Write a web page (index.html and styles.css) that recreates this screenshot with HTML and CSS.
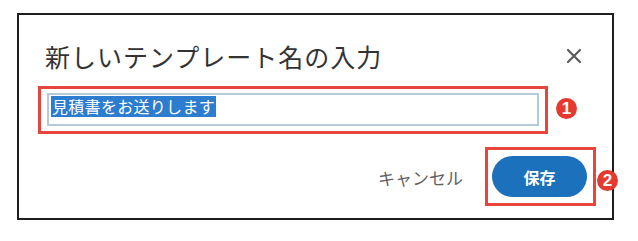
FILE: index.html
```html
<!DOCTYPE html>
<html lang="ja">
<head>
<meta charset="utf-8">
<title>新しいテンプレート名の入力</title>
<link rel="stylesheet" href="styles.css">
</head>
<body>
<div class="frame">
  <div class="header">
    <h1 class="title">新しいテンプレート名の入力</h1>
    <span class="close" aria-label="閉じる">
      <svg width="16" height="16" viewBox="0 0 16 16"><path d="M2 2 L14 14 M14 2 L2 14" stroke="#5a5a5a" stroke-width="2.2" stroke-linecap="round" fill="none"/></svg>
    </span>
  </div>
  <div class="input-row">
    <div class="mark mark-input">
      <div class="field"><span class="sel">見積書をお送りします</span></div>
    </div>
    <span class="badge">1</span>
  </div>
  <div class="footer">
    <span class="cancel">キャンセル</span>
    <div class="mark mark-btn">
      <button class="save">保存</button>
    </div>
    <span class="badge badge-2">2</span>
  </div>
</div>
</body>
</html>
```

FILE: styles.css
```css
html, body {
  margin: 0;
  padding: 0;
  background: #ffffff;
}
body {
  font-family: "Noto Sans CJK JP", "Noto Sans", sans-serif;
  padding: 13px 0 0 17px;
}
.frame {
  box-sizing: border-box;
  width: 597px;
  height: 207px;
  border: 2px solid #1e1e1e;
  background: #fff;
}
.header {
  display: flex;
  align-items: center;
  justify-content: space-between;
  padding: 26px 30px 0 26px;
  height: 30px;
}
.title {
  margin: 0;
  font-size: 25px;
  font-weight: 400;
  line-height: 30px;
  color: #333333;
  letter-spacing: 1px;
}
.close {
  display: flex;
  width: 16px;
  height: 16px;
}
.input-row {
  display: flex;
  align-items: center;
  margin-top: 15px;
  padding-left: 19px;
}
.mark {
  box-sizing: border-box;
  border: 3px solid #e5453b;
}
.mark-input {
  width: 510px;
  height: 48px;
  padding: 4px 6px 5px 6px;
}
.field {
  box-sizing: border-box;
  height: 33px;
  border: 2px solid #b5cad7;
  padding: 1px 0 0 2px;
  font-size: 16px;
  line-height: 21px;
  display: flex;
  align-items: flex-start;
}
.sel {
  background: #2c7ccf;
  color: #ffffff;
  padding: 0 1px;
  letter-spacing: 0.3px;
}
.badge {
  display: flex;
  align-items: center;
  justify-content: center;
  width: 21px;
  height: 21px;
  border-radius: 50%;
  background: #e53a2f;
  color: #fff;
  font-family: "Liberation Sans", Arial, sans-serif;
  font-weight: 700;
  font-size: 17px;
  line-height: 1;
  margin-left: 8px;
  margin-top: -3px;
}
.footer {
  display: flex;
  align-items: center;
  justify-content: flex-end;
  margin-top: 13px;
}
.cancel {
  font-size: 17px;
  color: #5f5f5f;
  margin-right: 22px;
  margin-top: 1px;
}
.mark-btn {
  width: 111px;
  height: 59px;
  padding: 6px 6px 6px 4px;
}
.save {
  width: 95px;
  height: 41px;
  border: none;
  border-radius: 21px;
  background: #1c71bd;
  color: #fff;
  font-family: "Noto Sans CJK JP", sans-serif;
  font-weight: 700;
  font-size: 16px;
  padding: 0;
}
.badge-2 {
  margin-left: 1px;
  margin-right: -6px;
  margin-top: 7px;
}
```
